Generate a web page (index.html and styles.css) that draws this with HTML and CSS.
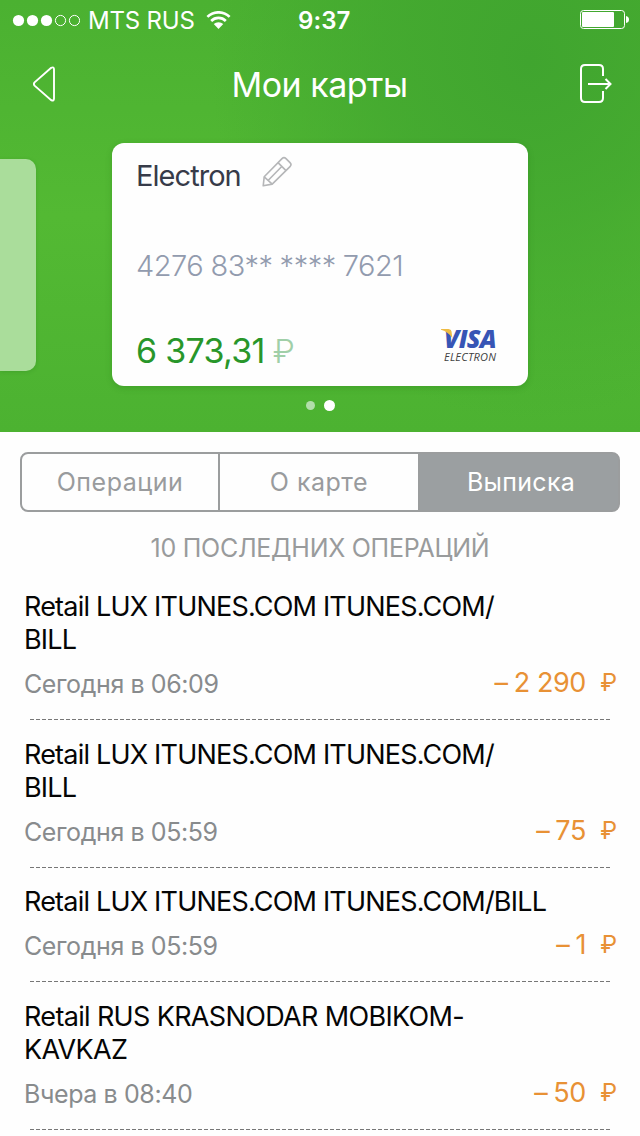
FILE: index.html
```html
<!DOCTYPE html>
<html lang="ru">
<head>
<meta charset="utf-8">
<title>Мои карты</title>
<link rel="stylesheet" href="styles.css">
</head>
<body>
<header class="hero">
  <div class="status">
    <svg class="signal" width="68" height="14" viewBox="0 0 68 14"><g fill="#fff"><circle cx="6.5" cy="7.5" r="5.6"/><circle cx="20.5" cy="7.5" r="5.6"/><circle cx="34.5" cy="7.5" r="5.6"/></g><g fill="none" stroke="#fff"><circle cx="48.5" cy="7.5" r="5.1"/><circle cx="62.5" cy="7.5" r="5.1"/></g></svg>
    <span class="carrier">MTS RUS</span>
    <svg class="wifi" width="25" height="19" viewBox="0 0 26 20"><g fill="none" stroke="#fff" stroke-width="2.8"><path d="M1.3 6.2a16.6 16.6 0 0 1 23.4 0"/><path d="M5.3 10.5a10.9 10.9 0 0 1 15.4 0"/></g><path d="M13 19l-5-5.2a7.1 7.1 0 0 1 10 0z" fill="#fff"/></svg>
    <span class="time">9:37</span>
    <svg class="battery" width="50" height="20" viewBox="0 0 50 20"><rect x=".5" y=".5" width="44" height="18" rx="3" fill="none" stroke="#fff"/><rect x="2" y="2" width="32" height="15" rx="1" fill="#fff"/><path d="M46 6q3 .5 3 3.5t-3 3.5z" fill="#fff"/></svg>
  </div>
  <nav class="nav">
    <svg class="back" width="26" height="36" viewBox="0 0 26 36"><path d="M18.2 1.8 1.6 16.3q-1.4 1.7 0 3.4l16.6 14.4q2.8 1.4 2.8-1.5V3.3q0-2.9-2.8-1.5z" fill="none" stroke="#fff" stroke-width="1.9"/></svg>
    <h1 class="title">Мои карты</h1>
    <svg class="exit" width="34" height="40" viewBox="0 0 34 40"><g fill="none" stroke="#fff" stroke-width="2"><path d="M23 12V5q0-4-4-4H5Q1 1 1 5v29q0 4 4 4h14q4 0 4-4v-7"/><path d="M8 20h22M25.5 15l5 5-5 5"/></g></svg>
  </nav>
  <div class="carousel">
    <div class="prev-card"></div>
    <section class="card">
      <div class="card-head"><span class="card-name">Electron</span>
        <svg class="pencil" width="32" height="32" viewBox="0 0 32 32"><g fill="none" stroke="#b5b6b8" stroke-width="1.6" stroke-linejoin="round"><path d="M1.2 29.8l1-9L20 2.6q2-2 4 0l4 4q2 2 0 4L10.2 28.1z"/><path d="M2.2 20.8l8 7.3M16 6.6l8 8M20 10.2 6.3 24.2"/></g></svg>
      </div>
      <div class="card-number">4276 83** **** 7621</div>
      <div class="card-foot">
        <div class="balance">6 373,31<span class="currency">₽</span></div>
        <div class="visa">
          <span class="visa-name">VISA</span><span class="visa-type">ELECTRON</span>
          <svg class="visa-flag" width="12" height="12" viewBox="0 0 12 12"><path d="M0 0h7.5q2.6 0 3 2.6L11.3 9Q7.5 3 0 .8z" fill="#eebb43"/></svg>
        </div>
      </div>
    </section>
  </div>
  <div class="dots"><i class="dot"></i><i class="dot dot-on"></i></div>
</header>
<main>
  <div class="tabs"><div class="tab">Операции</div><div class="tab">О карте</div><div class="tab tab-on">Выписка</div></div>
  <h2 class="caption">10 ПОСЛЕДНИХ ОПЕРАЦИЙ</h2>
  <div class="list">
    <article class="row"><div class="name">Retail LUX ITUNES.COM ITUNES.COM/<br>BILL</div><div class="meta"><span class="date">Сегодня в 06:09</span><span class="sum">–<b>2 290</b></span><span class="rub">₽</span></div></article>
    <article class="row"><div class="name">Retail LUX ITUNES.COM ITUNES.COM/<br>BILL</div><div class="meta"><span class="date">Сегодня в 05:59</span><span class="sum">–<b>75</b></span><span class="rub">₽</span></div></article>
    <article class="row row-single"><div class="name">Retail LUX ITUNES.COM ITUNES.COM/BILL</div><div class="meta"><span class="date">Сегодня в 05:59</span><span class="sum">–<b>1</b></span><span class="rub">₽</span></div></article>
    <article class="row"><div class="name name-wide">Retail RUS KRASNODAR MOBIKOM-<br>KAVKAZ</div><div class="meta"><span class="date">Вчера в 08:40</span><span class="sum">–<b>50</b></span><span class="rub">₽</span></div></article>
  </div>
</main>
</body>
</html>
```
FILE: styles.css
```css
* { box-sizing: border-box; }
body { margin: 0; width: 640px; height: 1136px; overflow: hidden; background: #fefefe; font-family: Inter, "Open Sans", sans-serif; white-space: nowrap; }
svg { display: block; flex: none; }
.hero { height: 432px; overflow: hidden; background: radial-gradient(ellipse 320px 360px at 530px 60px, #40a52f 0%, rgba(65,166,47,.7) 45%, rgba(76,177,49,0) 100%), linear-gradient(180deg, #4bb131 0%, #53b933 50%, #4cb231 100%); }
.status { display: flex; align-items: center; height: 40px; padding: 0 10px 0 12px; color: #fff; position: relative; }
.carrier { margin-left: 8px; font-size: 24px; letter-spacing: -.2px; }
.wifi { margin-left: 11px; }
.time { position: absolute; left: 298px; font-size: 24px; font-weight: 600; letter-spacing: .1px; }
.battery { margin-left: auto; }
.nav { height: 88px; padding: 0 26px 0 33px; display: flex; align-items: center; justify-content: space-between; }
.title { margin: 0; color: #fff; font-size: 34px; font-weight: 400; letter-spacing: -.5px; }
.carousel { margin-top: 15px; height: 243px; display: flex; }
.prev-card { width: 36px; height: 212px; margin: 16px 76px 0 0; border-radius: 0 10px 10px 0; background: #aadd9b; box-shadow: 0 1px 4px rgba(25,100,20,.2); }
.card { width: 416px; height: 243px; border-radius: 12px; background: #fefefe; padding: 13px 31px 0 24px; box-shadow: 0 2px 6px rgba(25,100,20,.22); }
.card-head { display: flex; height: 40px; line-height: 40px; }
.card-name { color: #373b49; font-size: 29px; letter-spacing: -.95px; width: 125px; }
.pencil { margin: 0 0 0 1px; }
.card-number { margin-top: 50px; line-height: 40px; font-size: 29px; font-weight: 300; color: #929bae; letter-spacing: -.5px; word-spacing: -.5px; }
.card-foot { display: flex; justify-content: space-between; margin-top: 38px; }
.balance { color: #28962a; font-size: 34px; line-height: 54px; letter-spacing: -.7px; }
.currency { color: #a0cfa8; font-size: 33px; font-weight: 300; margin-left: 8px; }
.visa { position: relative; width: 55px; margin-top: 1px; font-family: "Open Sans", sans-serif; font-style: italic; }
.visa-flag { position: absolute; left: -1px; top: 4px; }
.visa-name { display: block; font-size: 25px; line-height: 27px; font-weight: 800; color: #3755b5; letter-spacing: -.7px; padding-left: 2px; }
.visa-type { display: block; font-size: 11px; line-height: 10px; color: #414141; padding-left: 2px; letter-spacing: .2px; }
.dots { height: 40px; padding: 0 0 1px 1px; display: flex; justify-content: center; align-items: center; gap: 9px; }
.dot { width: 9px; height: 9px; border-radius: 50%; background: #b2deaa; }
.dot-on { width: 11px; height: 11px; background: #fff; }
.tabs { height: 60px; margin: 20px 20px 0; display: grid; grid-template-columns: 198px 200px 198px; border: 2px solid #9b9d9e; border-radius: 8px; background: linear-gradient(90deg, transparent 70%, #9b9fa1 70%); color: #999b9d; }
.tab { display: flex; align-items: center; justify-content: center; font-size: 25px; letter-spacing: .5px; border-right: 2px solid #9b9d9e; }
.tab-on { color: #fff; background: #9b9fa1; border-right: 0; border-radius: 0 6px 6px 0; padding-left: 4px; letter-spacing: .3px; }
.caption { margin: 16px 0 0; height: 40px; line-height: 40px; text-align: center; font-size: 25px; font-weight: 400; color: #999b9c; letter-spacing: -.27px; }
.list { margin-top: 4px; }
.row { height: 148px; padding: 18px 23px 0 24px; background: repeating-linear-gradient(90deg, #777 0 4px, transparent 4px 6px) 30px 100% / 580px 1px no-repeat; }
.row-single { height: 114px; padding-top: 17px; }
.name { font-size: 27px; line-height: 33px; color: #050505; letter-spacing: -.8px; }
.name-wide { letter-spacing: -.66px; }
.meta { display: flex; margin-top: 10px; height: 36px; line-height: 36px; }
.date { font-size: 25px; color: #888b8d; margin-right: auto; letter-spacing: -.4px; }
.sum { margin-top: -1px; font-size: 27px; color: #e89135; letter-spacing: -.4px; }
.sum b { font-weight: 400; margin-left: 6px; }
.rub { width: 31px; margin-top: -1px; text-align: right; color: #e89135; font-size: 24px; font-weight: 400; }
```
